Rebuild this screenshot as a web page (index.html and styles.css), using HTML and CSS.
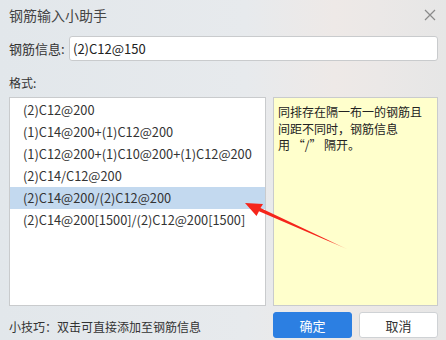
FILE: index.html
```html
<!DOCTYPE html>
<html lang="zh">
<head>
<meta charset="utf-8">
<link rel="stylesheet" href="styles.css">
</head>
<body>
<div class="dialog">
  <div class="titlebar">
    <span class="title">钢筋输入小助手</span>
    <svg class="close" width="12" height="12" viewBox="0 0 12 12"><path d="M1 1L11 11M11 1L1 11" stroke="#8a8a8a" stroke-width="1.2" fill="none"/></svg>
  </div>
  <div class="field">
    <span class="label">钢筋信息:</span>
    <div class="input">(2)C12@150</div>
  </div>
  <div class="section-label">格式:</div>
  <div class="main">
    <ul class="list">
      <li>(2)C12@200</li>
      <li>(1)C14@200+(1)C12@200</li>
      <li>(1)C12@200+(1)C10@200+(1)C12@200</li>
      <li>(2)C14/C12@200</li>
      <li class="selected">(2)C14@200/(2)C12@200</li>
      <li>(2)C14@200[1500]/(2)C12@200[1500]</li>
    </ul>
    <div class="note">同排存在隔一布一的钢筋且间距不同时，钢筋信息<span class="nb">用 “/” 隔开。</span></div>
  </div>
  <div class="footer">
    <span class="tip">小技巧：双击可直接添加至钢筋信息</span>
    <div class="buttons">
      <button class="btn primary">确定</button>
      <button class="btn">取消</button>
    </div>
  </div>
</div>
<svg class="arrow" width="446" height="340" viewBox="0 0 446 340">
  <defs>
    <linearGradient id="fade" x1="245" y1="203" x2="348" y2="249" gradientUnits="userSpaceOnUse">
      <stop offset="0" stop-color="#f5251b"/>
      <stop offset="0.8" stop-color="#f5251b"/>
      <stop offset="1" stop-color="#f5251b" stop-opacity="0.2"/>
    </linearGradient>
  </defs>
  <polygon points="245,203 263,204 260.5,208 348,249.5 259,211.2 256.5,216" fill="url(#fade)"/>
</svg>
</body>
</html>
```

FILE: styles.css
```css
* { box-sizing: border-box; }
html, body {
  margin: 0;
  padding: 0;
}
body {
  width: 446px;
  height: 340px;
  overflow: hidden;
  position: relative;
  font-family: "Noto Sans CJK SC", "Noto Sans", sans-serif;
  color: #333;
  background: linear-gradient(90deg, #e2e7eb 0%, #e7eaed 55%, #eee9e7 75%, #ebe8e7 85%, #e6e6e6 100%);
}
.dialog {
  display: flex;
  flex-direction: column;
  height: 340px;
  padding: 0 8px 0 9px;
}
.titlebar {
  height: 29px;
  display: flex;
  align-items: center;
  justify-content: space-between;
}
.title {
  font-size: 14px;
  color: #444;
  line-height: 1;
}
.close { margin-right: 2px; margin-top: 1px; }
.field {
  display: flex;
  align-items: center;
  gap: 6px;
  margin-top: 7px;
}
.label {
  font-size: 13px;
  width: 54px;
  white-space: nowrap;
}
.input {
  flex: 1;
  height: 25px;
  background: #fff;
  border: 1px solid #c9cbcd;
  border-radius: 3px;
  font-size: 13px;
  line-height: 23px;
  padding-left: 3px;
  color: #222;
}
.section-label {
  font-size: 12px;
  margin-top: 14px;
  line-height: 16px;
}
.main {
  display: flex;
  gap: 7px;
  margin-top: 6px;
  height: 209px;
}
.list {
  list-style: none;
  margin: 0;
  padding: 1px 0 0;
  width: 257px;
  background: #fff;
  border: 1px solid #c9cbcd;
}
.list li {
  height: 22px;
  line-height: 22px;
  font-size: 12.8px;
  padding-left: 13px;
  color: #333;
  white-space: nowrap;
}
.list li.selected {
  background: #c3d9ef;
}
.note {
  width: 165px;
  background: #ffffcc;
  border: 1px solid #c9cbcd;
  padding: 6px 10px 0 4px;
  font-size: 12px;
  line-height: 16.5px;
  color: #222;
}
.nb {
  white-space: nowrap;
  display: inline-block;
}
.footer {
  display: flex;
  align-items: center;
  justify-content: space-between;
  margin-top: 6px;
  height: 26px;
}
.tip {
  font-size: 12px;
  color: #333;
  margin-top: 3px;
}
.buttons {
  display: flex;
  gap: 7px;
}
.btn {
  width: 79px;
  height: 26px;
  border: 1px solid #cfd2d5;
  border-radius: 3px;
  background: #fff;
  font-family: "Noto Sans CJK SC", sans-serif;
  font-size: 13px;
  color: #333;
  padding: 0;
}
.btn.primary {
  background: #2c7fe2;
  border-color: #2c7fe2;
  color: #fff;
}
.arrow {
  position: absolute;
  left: 0;
  top: 0;
  pointer-events: none;
}
```
